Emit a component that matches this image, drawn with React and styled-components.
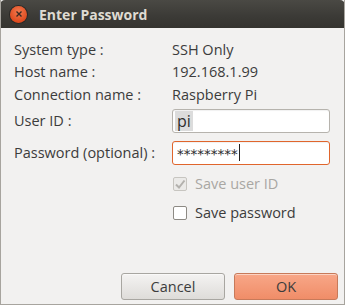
import React from "react";
import styled, { createGlobalStyle } from "styled-components";

const Global = createGlobalStyle`
  html, body { margin: 0; padding: 0; background: #f2f1f0; }
  * { box-sizing: border-box; }
`;

const Window = styled.div`
  width: 345px;
  height: 305px;
  display: flex;
  flex-direction: column;
  background: #f2f1f0;
  border: 1px solid #a7a49e;
  border-top: none;
  font-family: "Open Sans", "DejaVu Sans", sans-serif;
  font-size: 14.5px;
  color: #3c3c3c;
  overflow: hidden;
`;

const TitleBar = styled.div`
  height: 28px;
  display: flex;
  align-items: center;
  padding-left: 10px;
  gap: 12px;
  background: linear-gradient(#4a4944, #3b3a36 60%, #35342f);
  border-radius: 5px 5px 0 0;
  margin: 0 -1px;
`;

const CloseBtn = styled.div`
  width: 17px;
  height: 17px;
  border-radius: 50%;
  background: radial-gradient(circle at 50% 35%, #f37a4f, #df4b1f 70%);
  box-shadow: 0 0 0 1px #2a2926;
  display: flex;
  align-items: center;
  justify-content: center;
`;

const Title = styled.span`
  font-family: "Open Sans", sans-serif;
  font-weight: 700;
  font-size: 14px;
  color: #dfdbd2;
`;

const Body = styled.div`
  flex: 1;
  display: flex;
  flex-direction: column;
  padding: 10px 14px 0 13px;
`;

const Grid = styled.div`
  display: grid;
  grid-template-columns: 158px 158px;
`;

const Label = styled.div`
  height: ${(p) => p.h || 22.5}px;
  margin-top: ${(p) => p.mt || 0}px;
  display: flex;
  align-items: center;
  white-space: nowrap;
`;

const Value = styled(Label)``;

const Input = styled.div`
  height: 24px;
  margin-top: ${(p) => p.mt || 0}px;
  border: 1px solid ${(p) => (p.focus ? "#e0652c" : "#b6b3ad")};
  border-radius: 3px;
  background: #fff;
  display: flex;
  align-items: center;
  padding-left: 2px;
  font-size: 16px;
  color: #2e2e2e;
  box-shadow: inset 0 1px 1px rgba(0, 0, 0, 0.06);
`;

const Sel = styled.span`
  background: #dcdcdc;
  padding: 0 2px;
  line-height: 20px;
`;

const Caret = styled.span`
  display: inline-block;
  width: 1px;
  height: 17px;
  background: #222;
  margin-left: 1px;
`;

const Stars = styled.span`
  font-family: "DejaVu Sans", sans-serif;
  font-size: 13.5px;
  line-height: 14px;
  padding: 3px 0 0 2px;
`;

const CheckList = styled.div`
  display: flex;
  flex-direction: column;
  padding-top: 4px;
`;

const CheckRow = styled.div`
  height: ${(p) => p.h || 28}px;
  display: flex;
  align-items: center;
  gap: 8px;
  padding-left: 1px;
  color: ${(p) => (p.disabled ? "#a9a7a3" : "#3c3c3c")};
`;

const Box = styled.div`
  width: 14px;
  height: 14px;
  border: 1px solid ${(p) => (p.disabled ? "#c7c5c0" : "#8d8a84")};
  border-radius: 2px;
  background: ${(p) => (p.disabled ? "#ebeae8" : "#fff")};
  display: flex;
  align-items: center;
  justify-content: center;
`;

const Footer = styled.div`
  margin: auto -8px 0 0;
  display: flex;
  justify-content: flex-end;
  gap: 9px;
  padding-bottom: 4px;
`;

const Button = styled.div`
  width: 104px;
  height: 27px;
  border-radius: 3px;
  display: flex;
  align-items: center;
  justify-content: center;
  font-size: 14.5px;
  color: #3c3c3c;
  border: 1px solid ${(p) => (p.primary ? "#c77a5a" : "#a8a6a1")};
  background: ${(p) =>
    p.primary
      ? "linear-gradient(#f8a788, #f08d68)"
      : "linear-gradient(#f4f3f2, #dedcd9)"};
  box-shadow: inset 0 1px 0 rgba(255, 255, 255, 0.5);
`;

function App() {
  return (
    <>
      <Global />
      <Window>
        <TitleBar>
          <CloseBtn>
            <svg width="8" height="8" viewBox="0 0 8 8">
              <path d="M1.5 1.5 L6.5 6.5 M6.5 1.5 L1.5 6.5" stroke="#3a2a22" strokeWidth="1.4" />
            </svg>
          </CloseBtn>
          <Title>Enter Password</Title>
        </TitleBar>
        <Body>
          <Grid>
            <Label>System type :</Label>
            <Value>SSH Only</Value>
            <Label>Host name :</Label>
            <Value>192.168.1.99</Value>
            <Label>Connection name :</Label>
            <Value>Raspberry Pi</Value>
            <Label h={24} mt={3}>User ID :</Label>
            <Input mt={3}>
              <Sel>pi</Sel>
            </Input>
            <Label h={24} mt={8}>Password (optional) :</Label>
            <Input focus mt={8}>
              <Stars>*********</Stars>
              <Caret />
            </Input>
            <div />
            <CheckList>
              <CheckRow disabled h={30}>
                <Box disabled>
                  <svg width="12" height="12" viewBox="0 0 12 12">
                    <path d="M2 6.5 L5 9.5 L10.5 2.5" fill="none" stroke="#b3b1ad" strokeWidth="2" />
                  </svg>
                </Box>
                Save user ID
              </CheckRow>
              <CheckRow>
                <Box />
                Save password
              </CheckRow>
            </CheckList>
          </Grid>
          <Footer>
            <Button>Cancel</Button>
            <Button primary>OK</Button>
          </Footer>
        </Body>
      </Window>
    </>
  );
}

export default App;
